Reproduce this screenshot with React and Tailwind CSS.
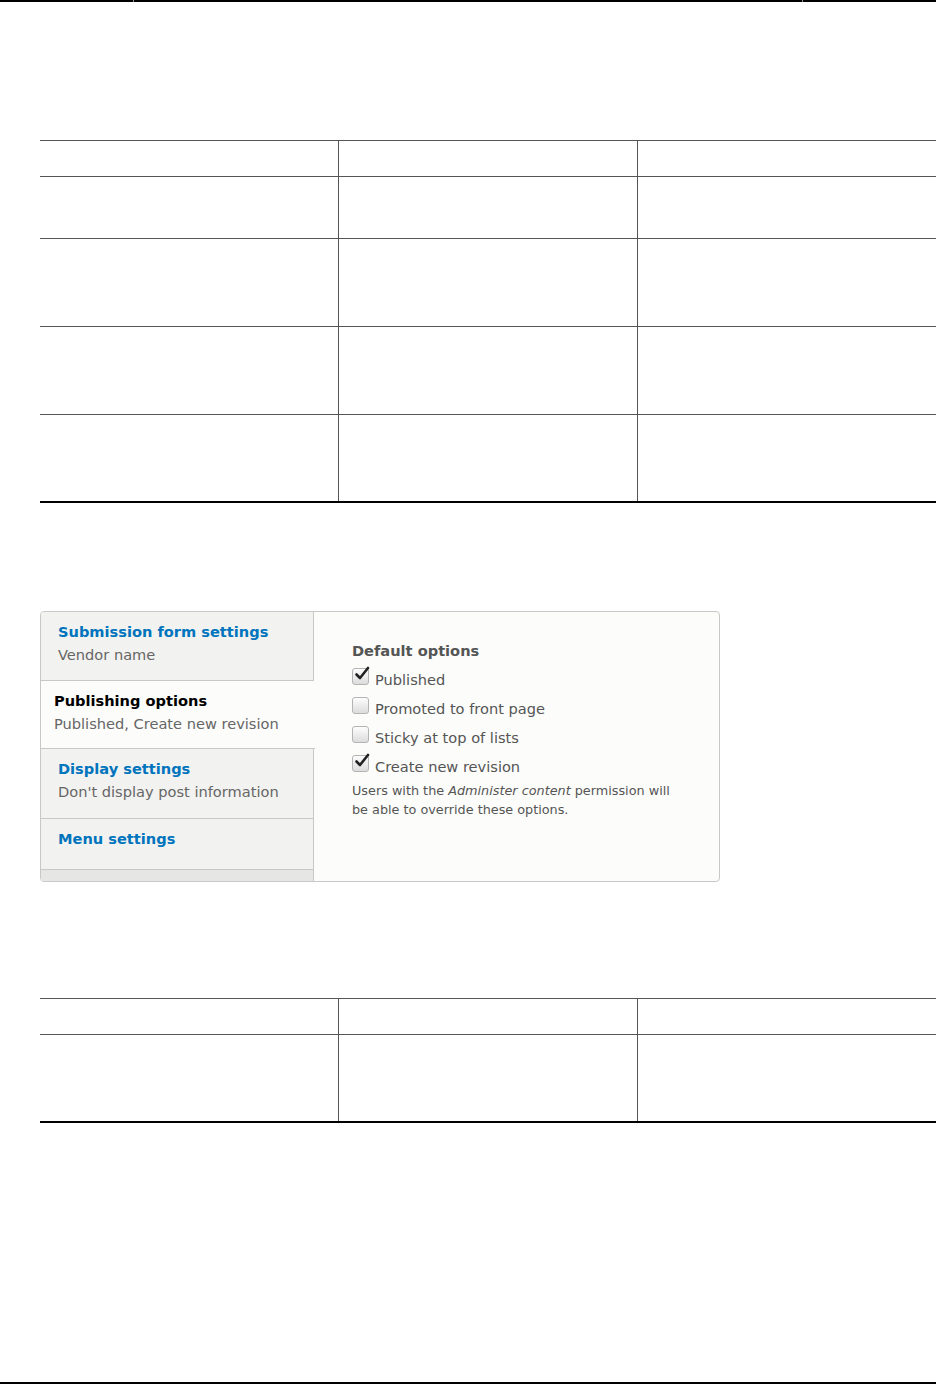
import React from 'react';

const font = { fontFamily: '"DejaVu Sans", Verdana, sans-serif' };

// a plain empty table: header height + row heights
function GridTable({ rows }) {
  return (
    <div className="w-[900px] border-t border-[#555]">
      {rows.map((h, i) => (
        <div
          key={i}
          className={
            'flex ' +
            (i === rows.length - 1 ? 'border-b-2 border-black' : 'border-b border-[#555]')
          }
          style={{ height: h }}
        >
          <div className="w-[298px]" />
          <div className="w-[299px] border-l border-[#555]" />
          <div className="flex-1 border-l border-[#555]" />
        </div>
      ))}
    </div>
  );
}

function Box({ checked }) {
  return (
    <span className="relative -translate-y-[3px] mr-[6px] inline-block h-[17px] w-[17px] shrink-0 rounded-[3px] border border-[#b4b4b4] bg-gradient-to-b from-[#fdfdfd] to-[#dcdcdc]">
      {checked && (
        <svg viewBox="0 0 16 16" className="absolute -top-[3px] left-[1px] h-[16px] w-[16px]">
          <path d="M2.5 8.5 L6 12 L14 2" fill="none" stroke="#222" strokeWidth="2.6" strokeLinecap="round" strokeLinejoin="round" />
        </svg>
      )}
    </span>
  );
}

const tabs = [
  { title: 'Submission form settings', summary: 'Vendor name', h: 'h-[69px]' },
  { title: 'Publishing options', summary: 'Published, Create new revision', h: 'h-[68px]', active: true },
  { title: 'Display settings', summary: "Don't display post information", h: 'h-[70px]' },
  { title: 'Menu settings', summary: '', h: 'h-[51px]' },
];

const options = [
  { label: 'Published', checked: true },
  { label: 'Promoted to front page', checked: false },
  { label: 'Sticky at top of lists', checked: false },
  { label: 'Create new revision', checked: true },
];

export default function App() {
  return (
    <div className="flex min-h-[1384px] w-[936px] flex-col overflow-hidden bg-white" style={font}>
      {/* end of previous table */}
      <div className="flex h-[2px] bg-black">
        <div className="w-[133px]" />
        <div className="w-px bg-[#888]" />
        <div className="w-[668px]" />
        <div className="w-px bg-[#888]" />
      </div>

      <div className="mt-[138px] pl-[40px]">
        <GridTable rows={[36, 62, 88, 88, 88]} />
      </div>

      <div className="mt-[108px] pl-[40px]">
        <div className="flex h-[271px] w-[680px] overflow-hidden rounded-[4px] border border-[#c8c8c8] bg-[#fcfcfa]">
          <div className="flex w-[273px] shrink-0 flex-col border-r border-[#c8c8c8] bg-[#f2f2f0]">
            {tabs.map((t) =>
              t.active ? (
                <div
                  key={t.title}
                  className={`${t.h} relative z-10 -mr-[2px] border-b border-[#c8c8c8] bg-[#fcfcfa] pl-[13px] pt-[8px] text-[14.6px] leading-[23px]`}
                >
                  <div className="font-bold text-black">{t.title}</div>
                  <div className="text-[#666]">{t.summary}</div>
                </div>
              ) : (
                <div
                  key={t.title}
                  className={`${t.h} border-b border-[#c8c8c8] pl-[17px] pt-[8px] text-[14.6px] leading-[23px]`}
                >
                  <div className="font-bold text-[#0074bd]">{t.title}</div>
                  {t.summary && <div className="text-[#666]">{t.summary}</div>}
                </div>
              )
            )}
            <div className="flex-1 bg-[#e6e6e4]" />
          </div>

          <div className="flex-1 pl-[38px] pt-[29px] text-[#555]">
            <div className="text-[14.6px] font-bold leading-[20px]">Default options</div>
            <div className="mt-[4px]">
              {options.map((o) => (
                <div key={o.label} className="flex h-[29px] items-center text-[14.6px]">
                  <Box checked={o.checked} />
                  <span>{o.label}</span>
                </div>
              ))}
            </div>
            <p className="text-[12.8px] leading-[19px]">
              Users with the <em>Administer content</em> permission will
              <br />
              be able to override these options.
            </p>
          </div>
        </div>
      </div>

      <div className="mt-[116px] pl-[40px]">
        <GridTable rows={[36, 88]} />
      </div>

      <div className="flex-1" />
      <div className="h-[2px] bg-black" />
    </div>
  );
}
